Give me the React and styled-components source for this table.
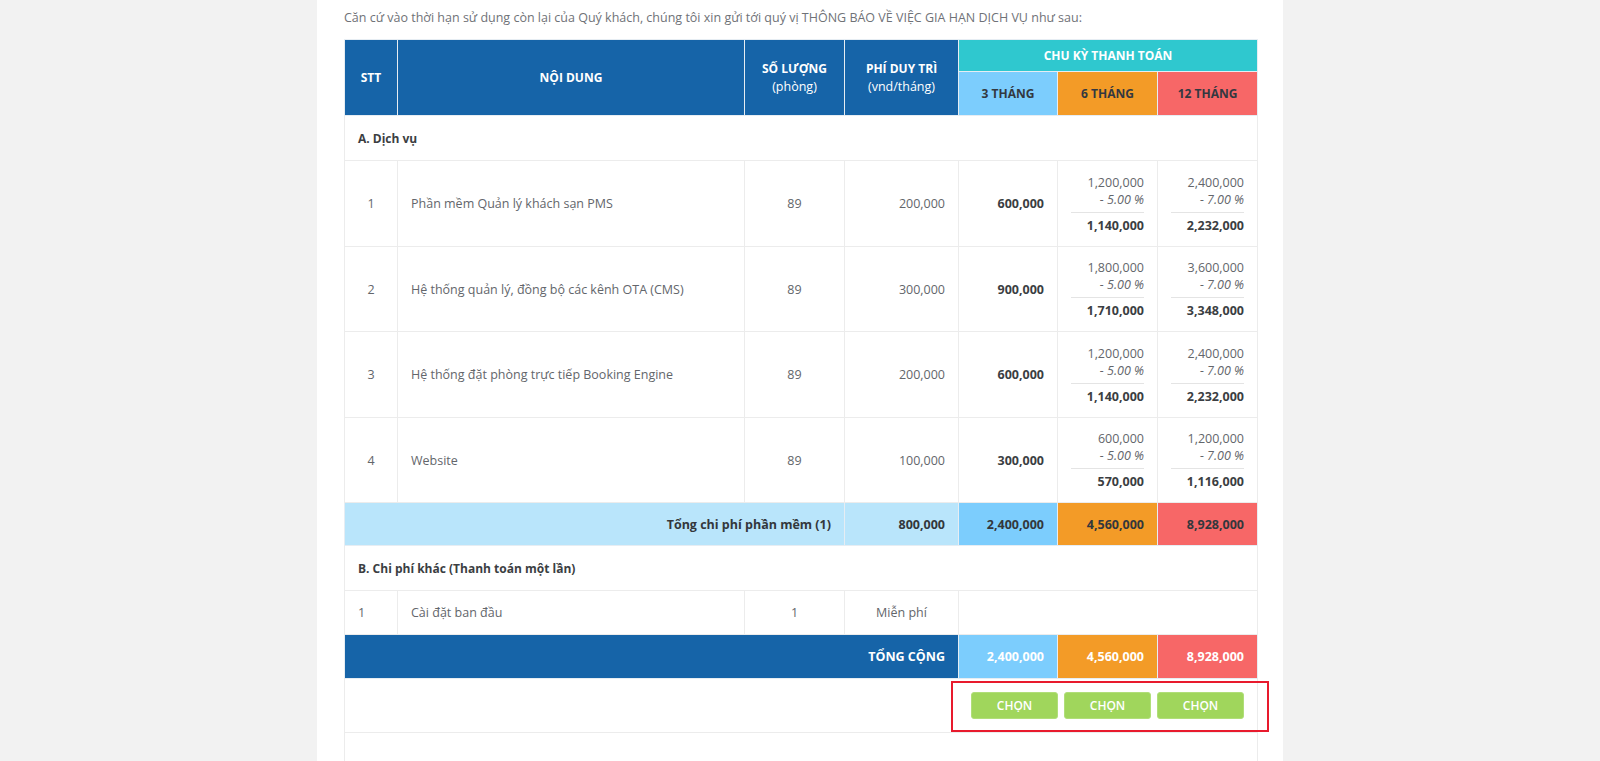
import React from 'react';
import styled, { createGlobalStyle } from 'styled-components';

const GlobalStyle = createGlobalStyle`
    html, body {
        margin: 0;
        padding: 0;
        background-color: #f2f2f2;
        font-family: "Open Sans", "Liberation Sans", sans-serif;
    }
`;

const Page = styled.div`
    display: flex;
    justify-content: center;
    min-height: 100vh;
`;

const Panel = styled.div`
    width: 966px;
    background-color: #ffffff;
    padding: 0 26px 0 27px;
    box-sizing: border-box;
`;

const Intro = styled.p`
    margin: 8px 0 11px 0;
    font-size: 12.5px;
    line-height: 20px;
    color: #6f7277;
`;

const Table = styled.table`
    width: 913px;
    border-collapse: collapse;
    table-layout: fixed;
    font-size: 12.5px;
    color: #55585c;
`;

const HeadCell = styled.th`
    background-color: ${({bg}) => bg || '#1664a8'};
    color: ${({dark}) => dark ? '#333840' : '#ffffff'};
    border: 1px solid #e6edf3;
    font-weight: 700;
    font-size: 12px;
    text-transform: uppercase;
    height: ${({h}) => h || 'auto'};
    padding: 0 6px;
    line-height: 18px;
    text-align: center;
    vertical-align: middle;

    .sub {
        display: block;
        text-transform: none;
        font-weight: 400;
        font-size: 12.5px;
    }
`;

const Cell = styled.td`
    border: 1px solid #ececec;
    padding: 0 13px;
    text-align: ${({align}) => align || 'left'};
    font-weight: ${({bold}) => bold ? 700 : 400};
    color: ${({bold}) => bold ? '#3b3e42' : '#63666b'};
    vertical-align: middle;
`;

const SectionRow = styled.tr`
    height: ${({h}) => h || '44px'};

    td {
        font-weight: 700;
        color: #3b3e42;
        font-size: 12px;
    }
`;

const DataRow = styled.tr`
    height: ${({h}) => h || '85px'};
`;

const TotalCell = styled.td`
    background-color: ${({bg}) => bg};
    color: ${({light}) => light ? '#ffffff' : '#33373c'};
    border: 1px solid #e6edf3;
    font-weight: 700;
    font-size: 12.5px;
    text-align: right;
    padding: 0 13px;
    vertical-align: middle;
`;

const PriceStack = styled.div`
    display: flex;
    flex-direction: column;
    text-align: right;
    line-height: 17px;

    .disc {
        font-style: italic;
    }

    .final {
        margin-top: 4px;
        padding-top: 4px;
        border-top: 1px solid #e4e4e4;
        font-weight: 700;
        color: #3b3e42;
    }
`;

const ButtonBar = styled.div`
    position: relative;
    display: flex;
    justify-content: flex-end;
    gap: 6px;
    margin-left: auto;
    width: fit-content;

    &::after {
        content: '';
        position: absolute;
        top: -11px;
        bottom: -13px;
        left: -20px;
        right: -25px;
        border: 2px solid #e81a2d;
        pointer-events: none;
    }
`;

const ChooseButton = styled.button`
    width: 87px;
    height: 27px;
    border: 1px solid #b0de79;
    border-radius: 3px;
    background-color: #a0d65c;
    color: #ffffff;
    font-family: "Open Sans", "Liberation Sans", sans-serif;
    font-size: 12px;
    font-weight: 600;
    cursor: pointer;
`;

const services = [
    { name: 'Phần mềm Quản lý khách sạn PMS', qty: 89, fee: '200,000', m3: '600,000', m6: ['1,200,000', '1,140,000'], m12: ['2,400,000', '2,232,000'] },
    { name: 'Hệ thống quản lý, đồng bộ các kênh OTA (CMS)', qty: 89, fee: '300,000', m3: '900,000', m6: ['1,800,000', '1,710,000'], m12: ['3,600,000', '3,348,000'] },
    { name: 'Hệ thống đặt phòng trực tiếp Booking Engine', qty: 89, fee: '200,000', m3: '600,000', m6: ['1,200,000', '1,140,000'], m12: ['2,400,000', '2,232,000'] },
    { name: 'Website', qty: 89, fee: '100,000', m3: '300,000', m6: ['600,000', '570,000'], m12: ['1,200,000', '1,116,000'] },
];

const COLORS = { m3: '#7ccdfd', m6: '#f39b27', m12: '#f76767' };

const App = () => {
    return (
        <Page>
            <GlobalStyle />
            <Panel>
                <Intro>
                    Căn cứ vào thời hạn sử dụng còn lại của Quý khách, chúng tôi xin gửi tới quý vị THÔNG BÁO VỀ VIỆC GIA HẠN DỊCH VỤ như sau:
                </Intro>
                <Table>
                    <colgroup>
                        <col style={{ width: 53 }} />
                        <col style={{ width: 347 }} />
                        <col style={{ width: 100 }} />
                        <col style={{ width: 114 }} />
                        <col style={{ width: 99 }} />
                        <col style={{ width: 100 }} />
                        <col style={{ width: 100 }} />
                    </colgroup>
                    <thead>
                        <tr>
                            <HeadCell rowSpan={2} h="31px">STT</HeadCell>
                            <HeadCell rowSpan={2}>Nội dung</HeadCell>
                            <HeadCell rowSpan={2}>Số lượng<span className="sub">(phòng)</span></HeadCell>
                            <HeadCell rowSpan={2}>Phí duy trì<span className="sub">(vnd/tháng)</span></HeadCell>
                            <HeadCell colSpan={3} bg="#2fc8cf" h="31px">Chu kỳ thanh toán</HeadCell>
                        </tr>
                        <tr>
                            <HeadCell bg={COLORS.m3} dark h="43px">3 tháng</HeadCell>
                            <HeadCell bg={COLORS.m6} dark>6 tháng</HeadCell>
                            <HeadCell bg={COLORS.m12} dark>12 tháng</HeadCell>
                        </tr>
                    </thead>
                    <tbody>
                        <SectionRow h="45px">
                            <Cell colSpan={7}>A. Dịch vụ</Cell>
                        </SectionRow>
                        {services.map((item, index) => (
                            <DataRow key={index} h={index % 2 === 0 ? '86px' : '85px'}>
                                <Cell align="center">{index + 1}</Cell>
                                <Cell>{item.name}</Cell>
                                <Cell align="center">{item.qty}</Cell>
                                <Cell align="right">{item.fee}</Cell>
                                <Cell align="right" bold>{item.m3}</Cell>
                                <Cell>
                                    <PriceStack>
                                        <span>{item.m6[0]}</span>
                                        <span className="disc">- 5.00 %</span>
                                        <span className="final">{item.m6[1]}</span>
                                    </PriceStack>
                                </Cell>
                                <Cell>
                                    <PriceStack>
                                        <span>{item.m12[0]}</span>
                                        <span className="disc">- 7.00 %</span>
                                        <span className="final">{item.m12[1]}</span>
                                    </PriceStack>
                                </Cell>
                            </DataRow>
                        ))}
                        <DataRow h="43px">
                            <TotalCell colSpan={3} bg="#b9e5fb">Tổng chi phí phần mềm (1)</TotalCell>
                            <TotalCell bg="#b9e5fb">800,000</TotalCell>
                            <TotalCell bg={COLORS.m3}>2,400,000</TotalCell>
                            <TotalCell bg={COLORS.m6}>4,560,000</TotalCell>
                            <TotalCell bg={COLORS.m12}>8,928,000</TotalCell>
                        </DataRow>
                        <SectionRow h="45px">
                            <Cell colSpan={7}>B. Chi phí khác (Thanh toán một lần)</Cell>
                        </SectionRow>
                        <DataRow h="44px">
                            <Cell>1</Cell>
                            <Cell>Cài đặt ban đầu</Cell>
                            <Cell align="center">1</Cell>
                            <Cell align="center">Miễn phí</Cell>
                            <Cell colSpan={3}></Cell>
                        </DataRow>
                        <DataRow h="44px">
                            <TotalCell colSpan={4} bg="#1664a8" light>TỔNG CỘNG</TotalCell>
                            <TotalCell bg={COLORS.m3} light>2,400,000</TotalCell>
                            <TotalCell bg={COLORS.m6} light>4,560,000</TotalCell>
                            <TotalCell bg={COLORS.m12} light>8,928,000</TotalCell>
                        </DataRow>
                        <DataRow h="54px">
                            <Cell colSpan={7}>
                                <ButtonBar>
                                    <ChooseButton>CHỌN</ChooseButton>
                                    <ChooseButton>CHỌN</ChooseButton>
                                    <ChooseButton>CHỌN</ChooseButton>
                                </ButtonBar>
                            </Cell>
                        </DataRow>
                        <DataRow h="60px">
                            <Cell colSpan={7}></Cell>
                        </DataRow>
                    </tbody>
                </Table>
            </Panel>
        </Page>
    );
};

export default App;
